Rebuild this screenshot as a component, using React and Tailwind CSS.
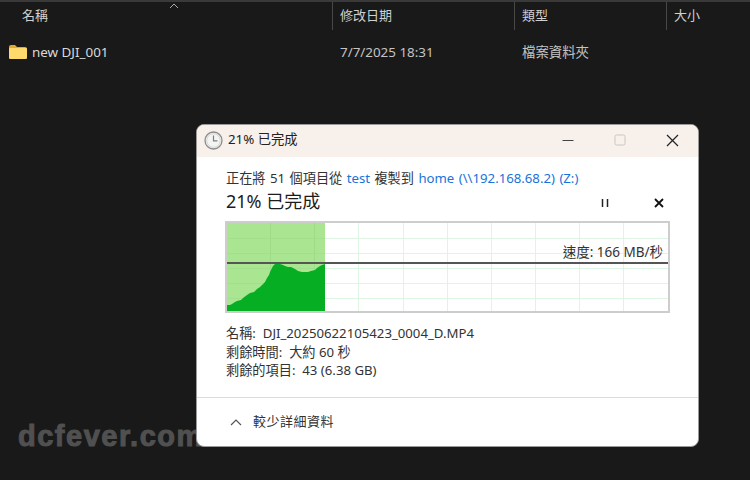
import React from "react";

const font = "font-['Noto_Sans','Noto_Sans_CJK_TC',sans-serif]";

const curve =
  "0,82 3,82 5,81 8,79 10,78 14,77 16,75 20,72 23,70 27,69 30,66 33,64 35,62 38,59 40,55 42,52 43,49 45,45 46,43 48,41 50,41 53,41 56,42 58,43 61,44 64,44 68,46 71,48 75,49 78,49 81,49 84,48 88,47 90,45 93,43 95,42 98,41";

const FolderIcon = () => (
  <svg width="18" height="14" viewBox="0 0 18 14" className="shrink-0">
    <path d="M0 2 Q0 0 2 0 H6 L8 2 H16 Q18 2 18 4 V12 Q18 14 16 14 H2 Q0 14 0 12 Z" fill="#e3a92c" />
    <path d="M0 4 Q0 3 1 3 H17 Q18 3 18 4 V12.500 Q18 14 16.500 14 H1.500 Q0 14 0 12.500 Z" fill="#ffd96c" />
  </svg>
);

const ClockIcon = () => (
  <svg width="19" height="19" viewBox="0 0 19 19" className="shrink-0">
    <circle cx="9.500" cy="9.500" r="8.500" fill="#f4f4f2" stroke="#8b8b8b" strokeWidth="1.300" />
    <circle cx="9.500" cy="9.500" r="6.800" fill="none" stroke="#d5d5d5" strokeWidth="1" />
    <path d="M9.500 4.500 V9.800 H13.500" fill="none" stroke="#7c7c7c" strokeWidth="1.200" />
  </svg>
);

const SpeedChart = () => {
  const verticals = [43, 87, 131, 176, 220, 264, 308, 352, 396];
  const horizontals = [15, 30, 45, 60, 75];
  return (
    <svg width="441" height="88" viewBox="0 0 441 88" className="block">
      <rect x="0" y="0" width="98" height="88" fill="#aae592" />
      {horizontals.map((y) => (
        <line key={y} x1="0" y1={y + 0.5} x2="441" y2={y + 0.5} stroke="#dff5e4" strokeWidth="1" />
      ))}
      {horizontals.map((y) => (
        <line key={y} x1="0" y1={y + 0.5} x2="98" y2={y + 0.5} stroke="#a3e08e" strokeWidth="1" />
      ))}
      {verticals.map((x) => (
        <line key={x} x1={x + 0.5} y1="0" x2={x + 0.5} y2="88" stroke={x < 98 ? "#9edc8a" : "#dff5e4"} strokeWidth="1" />
      ))}
      <polygon points={`0,88 ${curve} 98,88`} fill="#06ae24" />
      <line x1="0" y1="40" x2="441" y2="40" stroke="#555555" strokeWidth="2" />
    </svg>
  );
};

const CopyDialog = () => (
  <div className="absolute left-[196px] top-[124px] w-[503px] h-[323px] bg-white rounded-lg border border-[#9a9a9a] overflow-hidden flex flex-col">
    <div className="h-8 shrink-0 bg-[#f8f0ea] flex items-center pl-[7px] pb-[2px] text-[13px] text-[#222]">
      <ClockIcon />
      <span className="ml-[5px] text-[13.300px]">21% 已完成</span>
      <div className="ml-auto flex items-center text-[#333]">
        <svg width="12" height="12" viewBox="0 0 12 12" className="mr-[40px]">
          <line x1="0.500" y1="6.500" x2="11.500" y2="6.500" stroke="#444" strokeWidth="1.200" />
        </svg>
        <svg width="12" height="12" viewBox="0 0 12 12" className="mr-[40px]">
          <rect x="1" y="1" width="10" height="10" rx="1.500" fill="none" stroke="#c9c6c3" strokeWidth="1" />
        </svg>
        <svg width="13" height="13" viewBox="0 0 13 13" className="mr-[19px]">
          <path d="M1 1 L12 12 M12 1 L1 12" fill="none" stroke="#222" strokeWidth="1.200" />
        </svg>
      </div>
    </div>
    <div className="flex-1 flex flex-col pl-[29px] pr-[30px]">
      <div className="mt-[11px] text-[13.200px] leading-[20px] [word-spacing:1px] text-[#333] whitespace-nowrap">
        正在將 51 個項目從 <span className="text-[#1a73d9]">test</span> 複製到{" "}
        <span className="text-[#1a73d9]">home (\\192.168.68.2) (Z:)</span>
      </div>
      <div className="flex items-center h-[26px]">
        <span className="text-[18px] leading-[26px] text-[#1c1c1c]">21% 已完成</span>
        <div className="ml-auto flex items-center">
          <svg width="8" height="8" viewBox="0 0 8 8" className="mr-[45px] mt-[3px]">
            <path d="M1.500 0 V8 M6.500 0 V8" stroke="#222" strokeWidth="1.500" />
          </svg>
          <svg width="10" height="10" viewBox="0 0 10 10" className="mr-[4px] mt-[3px]">
            <path d="M1 1 L9 9 M9 1 L1 9" stroke="#111" strokeWidth="1.800" />
          </svg>
        </div>
      </div>
      <div className="relative mt-[7px] -ml-px w-[445px] h-[92px] border-2 border-[#cdcdcd] bg-white">
        <SpeedChart />
        <span className="absolute right-[5px] top-[19px] text-[13.500px] leading-[20px] text-[#333] whitespace-nowrap">
          速度: 166 MB/秒
        </span>
      </div>
      <div className="mt-[11px] text-[13.200px] leading-[18.500px] text-[#333] whitespace-nowrap">
        <div>名稱:&nbsp; DJI_20250622105423_0004_D.MP4</div>
        <div>剩餘時間:&nbsp; 大約 60 秒</div>
        <div>剩餘的項目:&nbsp; 43 (6.38 GB)</div>
      </div>
    </div>
    <div className="h-[49px] shrink-0 border-t border-[#dcdcdc] flex items-center pl-[33px] text-[13px] text-[#333]">
      <svg width="12" height="8" viewBox="0 0 12 8">
        <path d="M1 7 L6 2 L11 7" fill="none" stroke="#555" strokeWidth="1.200" />
      </svg>
      <span className="ml-[11px] tracking-[0.5px]">較少詳細資料</span>
    </div>
  </div>
);

export default function App() {
  return (
    <div className={`relative w-[750px] h-[480px] overflow-hidden bg-[#191919] ${font}`}>
      <div className="h-[2px] bg-[#3a3a3a]" />
      <div className="grid grid-cols-[332px_182px_152px_84px] h-[28px] text-[13px] text-[#d0d0d0]">
        <div className="relative flex items-center pl-[22px]">
          名稱
          <svg width="10" height="6" viewBox="0 0 10 6" className="absolute left-[169px] top-[1px]">
            <path d="M1 5 L5 1 L9 5" fill="none" stroke="#a8a8a8" strokeWidth="1" />
          </svg>
        </div>
        <div className="flex items-center pl-[7px] border-l border-[#484848]">修改日期</div>
        <div className="flex items-center pl-[7px] border-l border-[#484848]">類型</div>
        <div className="flex items-center pl-[7px] border-l border-[#484848]">大小</div>
      </div>
      <div className="grid grid-cols-[332px_182px_152px_84px] mt-[7px] h-[30px] items-center text-[13.400px] text-[#dadada]">
        <div className="flex items-center pl-[9px] gap-[5px]">
          <FolderIcon />
          <span>new DJI_001</span>
        </div>
        <div className="pl-[8px] text-[#c4c4c4]">7/7/2025 18:31</div>
        <div className="pl-[8px] text-[#c4c4c4]">檔案資料夾</div>
        <div />
      </div>
      <span className="absolute left-[18px] top-[418px] font-['Liberation_Sans',sans-serif] font-bold text-[29px] leading-[36px] tracking-[1.500px] [-webkit-text-stroke:1px_#505050] text-[#505050]">
        dcfever.com
      </span>
      <CopyDialog />
    </div>
  );
}
